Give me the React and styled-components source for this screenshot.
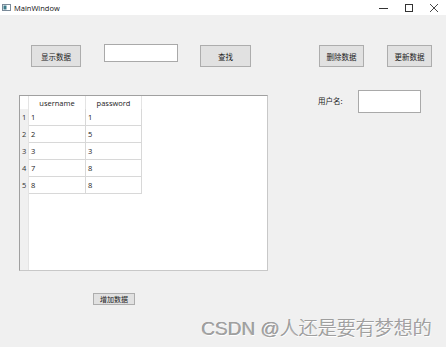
import React from 'react'
import styled, { createGlobalStyle } from 'styled-components'

const rows = [
  ['1', '1'],
  ['2', '5'],
  ['3', '3'],
  ['7', '8'],
  ['8', '8'],
]

const Global = createGlobalStyle`
  html, body { margin: 0; padding: 0; }
  body {
    background: #f0f0f0;
    font-family: "Noto Sans CJK SC", "Liberation Sans", sans-serif;
    color: #000;
  }
`

const App = () => {
  return (
    <Window>
      <Global />
      <TitleBar>
        <AppIcon>
          <svg width="9" height="7" viewBox="0 0 9 7">
            <rect x="0.5" y="0.5" width="8" height="6" fill="#fff" stroke="#7a8a99" />
            <rect x="1.5" y="1.5" width="3" height="4" fill="#3a7a8a" />
          </svg>
        </AppIcon>
        <Title>MainWindow</Title>
        <Controls>
          <svg width="10" height="10" viewBox="0 0 10 10">
            <line x1="0" y1="5.5" x2="9" y2="5.5" stroke="#333" strokeWidth="1" />
          </svg>
          <svg width="10" height="10" viewBox="0 0 10 10">
            <rect x="1.5" y="1.5" width="7" height="7" fill="none" stroke="#333" strokeWidth="1" />
          </svg>
          <svg width="10" height="10" viewBox="0 0 10 10">
            <path d="M1 1 L9 9 M9 1 L1 9" stroke="#333" strokeWidth="0.9" />
          </svg>
        </Controls>
      </TitleBar>

      <Content>
        <TopRow>
          <Button w={50} ml={31}>显示数据</Button>
          <Input w={74} h={18} ml={23} />
          <Button w={51} ml={22}>查找</Button>
          <Button w={45} ml={68}>删除数据</Button>
          <Button w={45} ml={23}>更新数据</Button>
        </TopRow>

        <MiddleRow>
          <Table>
            <VHeader>
              <Corner />
              {rows.map((r, i) => (
                <RowLabel key={i}>{i + 1}</RowLabel>
              ))}
            </VHeader>
            <Body>
              <HeadRow>
                <HeadCell w={57}>username</HeadCell>
                <HeadCell w={56}>password</HeadCell>
              </HeadRow>
              {rows.map((r, i) => (
                <DataRow key={i}>
                  <Cell w={57}>{r[0]}</Cell>
                  <Cell w={56}>{r[1]}</Cell>
                </DataRow>
              ))}
            </Body>
          </Table>

          <UserPanel>
            <Label>用户名:</Label>
            <Input w={63} h={23} ml={15} />
          </UserPanel>
        </MiddleRow>

        <BottomRow>
          <SmallButton>增加数据</SmallButton>
        </BottomRow>

        <Watermark>CSDN @人还是要有梦想的</Watermark>
      </Content>
    </Window>
  )
}

export default App

const Window = styled.div`
  width: 446px;
  height: 347px;
  background: #f0f0f0;
  overflow: hidden;
  display: flex;
  flex-direction: column;
`

const TitleBar = styled.div`
  height: 15px;
  background: #fff;
  display: flex;
  align-items: center;
`

const AppIcon = styled.div`
  margin-left: 2px;
  display: flex;
`

const Title = styled.div`
  margin-left: 3px;
  font-family: "Open Sans", "Liberation Sans", sans-serif;
  font-size: 7.5px;
  color: #111;
`

const Controls = styled.div`
  margin-left: auto;
  margin-right: 7px;
  display: flex;
  gap: 15px;
  align-items: center;
`

const Content = styled.div`
  flex: 1;
  position: relative;
  display: flex;
  flex-direction: column;
`

const TopRow = styled.div`
  display: flex;
  align-items: flex-start;
  padding-top: 29px;
`

const Button = styled.div`
  box-sizing: border-box;
  width: ${p => p.w}px;
  height: 22px;
  margin-left: ${p => p.ml}px;
  margin-top: 1px;
  background: #e1e1e1;
  border: 1px solid #adadad;
  display: flex;
  align-items: center;
  justify-content: center;
  font-size: 7.5px;
  color: #222;
`

const Input = styled.div`
  box-sizing: border-box;
  width: ${p => p.w}px;
  height: ${p => p.h}px;
  margin-left: ${p => p.ml || 0}px;
  background: #fff;
  border: 1px solid #a9a9a9;
`

const MiddleRow = styled.div`
  display: flex;
  align-items: flex-start;
  margin-top: 23px;
`

const Table = styled.div`
  box-sizing: border-box;
  width: 249px;
  height: 176px;
  margin-left: 19px;
  margin-top: 5px;
  background: #fff;
  border: 1px solid #a0a0a0;
  border-right-color: #c8c8c8;
  border-bottom-color: #c8c8c8;
  display: flex;
`

const VHeader = styled.div`
  width: 8px;
  background: #f0f0f0;
  border-right: 1px solid #e4e4e4;
  display: flex;
  flex-direction: column;
`

const Corner = styled.div`
  height: 13px;
  background: #fff;
`

const RowLabel = styled.div`
  box-sizing: border-box;
  height: 17px;
  display: flex;
  align-items: center;
  padding-left: 2px;
  padding-bottom: 2px;
  font-family: "Open Sans", "Liberation Sans", sans-serif;
  font-size: 7.5px;
  color: #333;
`

const Body = styled.div`
  display: flex;
  flex-direction: column;
`

const HeadRow = styled.div`
  display: flex;
  height: 13px;
`

const HeadCell = styled.div`
  box-sizing: border-box;
  width: ${p => p.w}px;
  border-right: 1px solid #e4e4e4;
  display: flex;
  align-items: center;
  justify-content: center;
  font-family: "Open Sans", "Liberation Sans", sans-serif;
  font-size: 7.5px;
  color: #222;
`

const DataRow = styled.div`
  display: flex;
  height: 17px;
`

const Cell = styled.div`
  box-sizing: border-box;
  width: ${p => p.w}px;
  border-right: 1px solid #d8d8d8;
  border-bottom: 1px solid #d8d8d8;
  display: flex;
  align-items: center;
  padding-left: 2px;
  font-family: "Open Sans", "Liberation Sans", sans-serif;
  font-size: 7.5px;
  color: #222;
`

const UserPanel = styled.div`
  display: flex;
  align-items: center;
  margin-left: 50px;
`

const Label = styled.div`
  font-size: 7.5px;
  color: #222;
  margin-top: -3px;
`

const BottomRow = styled.div`
  display: flex;
  margin-top: 22px;
`

const SmallButton = styled.div`
  box-sizing: border-box;
  width: 42px;
  height: 12px;
  margin-left: 93px;
  background: #e1e1e1;
  border: 1px solid #adadad;
  display: flex;
  align-items: center;
  justify-content: center;
  font-size: 7px;
  color: #222;
`

const Watermark = styled.div`
  position: absolute;
  right: 14px;
  bottom: 7px;
  font-family: "Liberation Sans", "Noto Sans CJK SC", sans-serif;
  font-size: 19px;
  font-weight: 300;
  color: #a0a0a0;
  text-shadow: 0.5px 0.5px 0 #fff, -0.5px -0.5px 0 #8a8a8a;
  white-space: nowrap;
`
